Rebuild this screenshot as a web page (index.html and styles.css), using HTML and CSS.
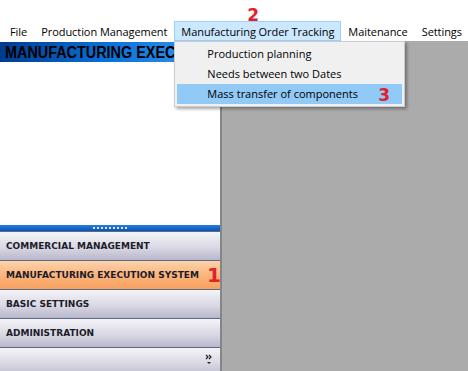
FILE: index.html
```html
<!DOCTYPE html>
<html lang="en">
<head>
  <meta charset="UTF-8">
  <title>Manufacturing Execution</title>
  <link rel="stylesheet" href="styles.css">
</head>
<body>
  <div class="top">
    <div class="menubar">
      <span class="item">File</span>
      <span class="item">Production Management</span>
      <span class="item open">Manufacturing Order Tracking<span class="mark m2">2</span>
        <div class="dropdown">
          <div class="entry">Production planning</div>
          <div class="entry">Needs between two Dates</div>
          <div class="entry hot">Mass transfer of components<span class="mark m3">3</span></div>
        </div>
      </span>
      <span class="item">Maitenance</span>
      <span class="item">Settings</span>
    </div>
  </div>

  <div class="main">
    <div class="side">
      <div class="title"><span class="caption">MANUFACTURING EXECUTION SYSTEM</span></div>
      <div class="blank"></div>
      <div class="splitter"><span class="grip"></span></div>
      <div class="btn">COMMERCIAL MANAGEMENT</div>
      <div class="btn active">MANUFACTURING EXECUTION SYSTEM<span class="mark m1">1</span></div>
      <div class="btn">BASIC SETTINGS</div>
      <div class="btn">ADMINISTRATION</div>
      <div class="foot">
        <svg width="8" height="12" viewBox="0 0 8 12">
          <path d="M1 1 L3 3 L1 5 M4 1 L6 3 L4 5" stroke="#222" stroke-width="1.2" fill="none"/>
          <path d="M2 8 L6 8 L4 10 Z" fill="#222"/>
        </svg>
      </div>
    </div>
    <div class="work"></div>
  </div>
</body>
</html>
```

FILE: styles.css
```css
body { margin: 0; width: 468px; height: 371px; overflow: hidden; background: #fff; font-family: "Open Sans", sans-serif; }
.top { height: 41px; display: flex; flex-direction: column; justify-content: flex-end; }
.menubar { display: flex; height: 20px; padding-left: 3px; font-size: 11px; letter-spacing: -0.06px; color: #000; white-space: nowrap; }
.item { position: relative; padding: 0 6px; line-height: 19px; border: 1px solid transparent; }
.item.open { background: #cce8ff; border-color: #99d1ff; }
.mark { position: absolute; color: #e0202a; font-family: "DejaVu Sans", sans-serif; font-weight: bold; font-size: 17px; line-height: 1; letter-spacing: 0; }
.m2 { left: 72px; top: -15px; }
.dropdown { position: absolute; left: -1px; top: 19px; width: 225px; padding: 2px; background: #f0f0f0; border: 1px solid #ccc; box-shadow: 2px 2px 3px rgba(0,0,0,0.35); z-index: 5; letter-spacing: 0; }
.entry { position: relative; height: 20px; line-height: 20px; padding-left: 30px; }
.entry.hot { background: #91c9f7; }
.m3 { left: 201px; top: 3px; }

.main { display: flex; height: 330px; }
.side { width: 220px; display: flex; flex-direction: column; background: #fff; border-right: 2px solid #858585; }
.title { height: 20px; margin-top: 1px; line-height: 20px; padding-left: 5px; white-space: nowrap; overflow: hidden; background: linear-gradient(to right, #003b8f, #0a72d9 50%, #3d98ef); }
.caption { display: inline-block; transform: scaleX(0.9); transform-origin: left center; font-family: "Liberation Sans", sans-serif; font-weight: bold; font-size: 16px; color: #000; }
.blank { flex: 1; }
.splitter { height: 6px; display: flex; justify-content: center; align-items: center; background: linear-gradient(#2a7de0, #0654b8); }
.grip { width: 34px; height: 2px; background: repeating-linear-gradient(to right, #d8e6ff 0 2px, transparent 2px 4px); }
.btn { position: relative; height: 28px; line-height: 28px; padding-left: 6px; white-space: nowrap; font-family: "DejaVu Sans", sans-serif; font-weight: bold; font-size: 9px; color: #1c1c2a; background: linear-gradient(#f4f4f8, #d9d8e4 55%, #b9b7cb); border-top: 1px solid #5b6a85; }
.btn.active { background: linear-gradient(#fdd3ab, #fbb57c 50%, #f8a15f); }
.m1 { left: 207px; top: 4px; font-size: 20px; }
.foot { height: 23px; display: flex; justify-content: flex-end; align-items: center; padding-right: 7px; background: linear-gradient(#f4f4f8, #dcdbe6 60%, #c8c7d6); border-top: 1px solid #5b6a85; }
.work { flex: 1; background: #ababab; }
```
